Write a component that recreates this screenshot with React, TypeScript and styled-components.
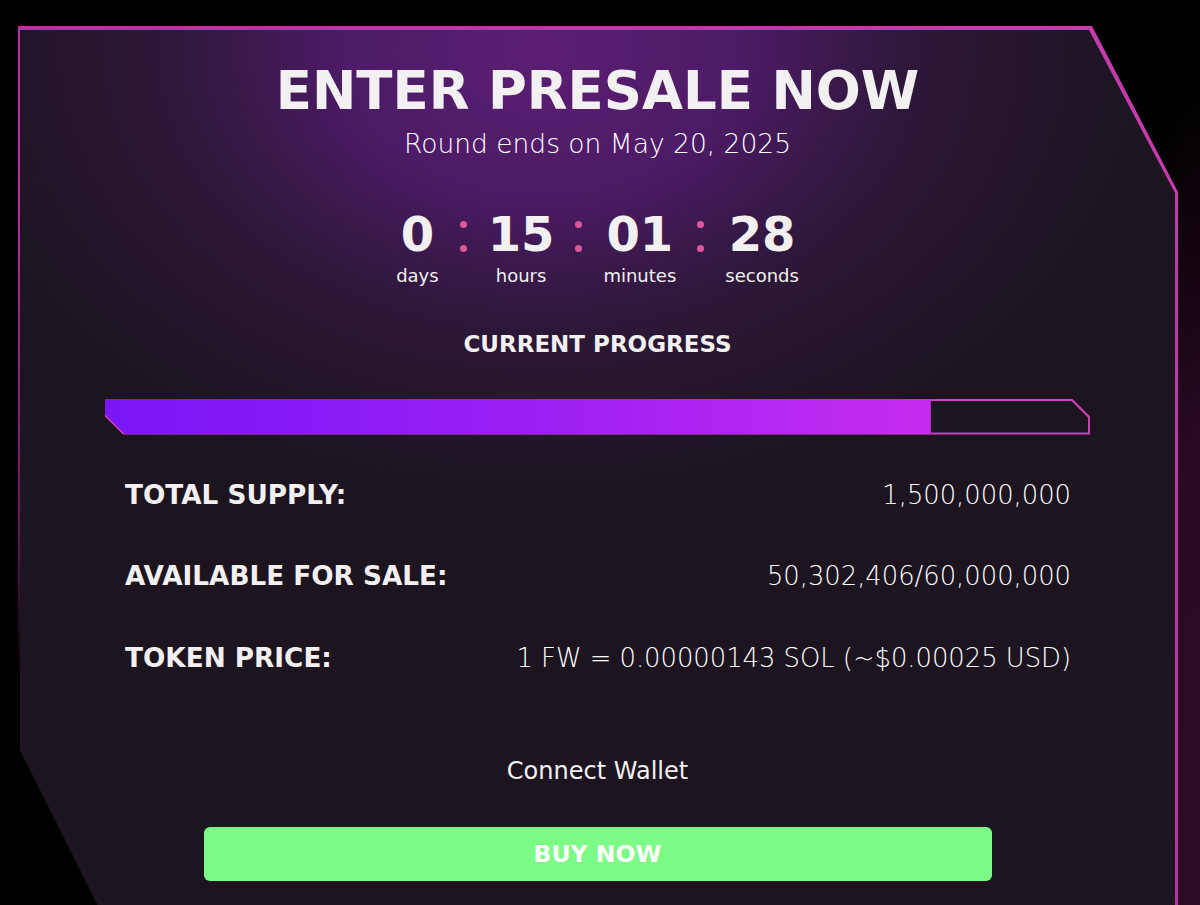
import React from 'react';
import styled, { createGlobalStyle } from 'styled-components';

const FONT = `"DejaVu Sans", "Liberation Sans", sans-serif`;
const TEXT = '#f3f0f1';
const CARD_BG = '#1c1520';

const GlobalStyle = createGlobalStyle`
  html, body {
    margin: 0;
    padding: 0;
    background: #000;
  }
  * {
    box-sizing: border-box;
  }
`;

const Page = styled.div`
  width: 1200px;
  height: 905px;
  overflow: hidden;
  padding: 26px 0 0 18px;
  font-family: ${FONT};
  color: ${TEXT};
  background:
    radial-gradient(ellipse 110px 820px at 100% 100%, #2c0b24 0%, #2a0a22 55%, rgba(20, 4, 16, 0) 100%),
    #000;
`;

const Frame = styled.div`
  width: 1160px;
  height: 900px;
  padding: 4px 3px 0 2px;
  clip-path: polygon(0 0, 1074px 0, 100% 166px, 100% 100%, 90px 100%, 0 720px);
  background: linear-gradient(
    to bottom left,
    #c63db0 0%,
    #b92ca2 60%,
    rgba(170, 40, 150, 0.6) 78%,
    rgba(170, 40, 150, 0) 86%
  );
`;

const Card = styled.section`
  height: 100%;
  display: flex;
  flex-direction: column;
  align-items: center;
  padding: 34px 85px 0 85px;
  clip-path: polygon(0 0, 1069px 0, 100% 163px, 100% 100%, 88px 100%, 0 721px);
  background:
    radial-gradient(ellipse 600px 440px at 520px 20px, #5c1e72 0%, #4d1b67 32%, rgba(52, 24, 66, 0.75) 62%, rgba(28, 21, 32, 0) 100%),
    ${CARD_BG};
`;

const Title = styled.h1`
  margin: 0;
  font-size: 53px;
  line-height: 1;
  font-weight: 700;
`;

const Subtitle = styled.p`
  margin: 14px 0 0;
  font-size: 26.5px;
  line-height: 1;
  font-weight: 200;
  color: #ffffff;
`;

const Countdown = styled.div`
  display: flex;
  align-items: flex-start;
  gap: 21px;
  margin-top: 52px;
`;

const Unit = styled.div`
  display: flex;
  flex-direction: column;
  align-items: center;
`;

const Number = styled.span`
  font-size: 48px;
  line-height: 1;
  font-weight: 700;
`;

const UnitLabel = styled.span`
  margin-top: 9px;
  font-size: 18px;
  line-height: 1;
  font-weight: 400;
`;

const Colon = styled.div`
  display: flex;
  flex-direction: column;
  gap: 17px;
  padding-top: 11px;

  &::before,
  &::after {
    content: '';
    width: 7px;
    height: 7px;
    border-radius: 50%;
    background: #e0569c;
  }
`;

const SectionTitle = styled.h2`
  margin: 48px 0 0;
  font-size: 23px;
  line-height: 1;
  font-weight: 700;
`;

const Track = styled.div`
  position: relative;
  width: 100%;
  height: 36px;
  margin-top: 43px;
  padding: 2px;
  background: #d23fba;
  clip-path: polygon(0 0, calc(100% - 18px) 0, 100% 18px, 100% 100%, 18px 100%, 0 calc(100% - 18px));
`;

const TrackInner = styled.div`
  height: 100%;
  background: ${CARD_BG};
  clip-path: polygon(0 0, calc(100% - 17px) 0, 100% 17px, 100% 100%, 17px 100%, 0 calc(100% - 17px));
`;

const Fill = styled.div`
  position: absolute;
  left: 0;
  top: 0;
  bottom: 0;
  background: linear-gradient(to right, #7a16f7 0%, #9a1ff4 50%, #c62cef 100%);
  clip-path: polygon(0 0, 100% 0, 100% 100%, 20px 100%, 0 calc(100% - 20px));
`;

const Stats = styled.div`
  width: 100%;
  display: flex;
  flex-direction: column;
  gap: 55px;
  margin-top: 47px;
  padding: 0 19px 0 20px;
`;

const StatRow = styled.div`
  display: flex;
  justify-content: space-between;
  align-items: baseline;
  line-height: 1;
`;

const StatLabel = styled.span`
  font-size: 26.3px;
  font-weight: 700;
`;

const StatValue = styled.span`
  font-size: 25.8px;
  font-weight: 200;
  color: #ffffff;
`;

const Connect = styled.div`
  margin-top: 87px;
  font-size: 24px;
  line-height: 1;
  font-weight: 400;
`;

const BuyButton = styled.button`
  width: 788px;
  height: 54px;
  margin-top: 44px;
  border: none;
  border-radius: 6px;
  background: #7cfc86;
  color: #ffffff;
  font-family: ${FONT};
  font-size: 23.5px;
  font-weight: 700;
  cursor: pointer;
`;

const units = [
  { value: '0', label: 'days' },
  { value: '15', label: 'hours' },
  { value: '01', label: 'minutes' },
  { value: '28', label: 'seconds' },
];

const stats = [
  { label: 'TOTAL SUPPLY:', value: '1,500,000,000' },
  { label: 'AVAILABLE FOR SALE:', value: '50,302,406/60,000,000' },
  { label: 'TOKEN PRICE:', value: '1 FW = 0.00000143 SOL (~$0.00025 USD)' },
];

const sold = 50302406;
const forSale = 60000000;

export default function App() {
  const progress = (sold / forSale) * 100;

  return (
    <>
      <GlobalStyle />
      <Page>
        <Frame>
          <Card>
            <Title>ENTER PRESALE NOW</Title>
            <Subtitle>Round ends on May 20, 2025</Subtitle>

            <Countdown>
              {units.map((u, i) => (
                <React.Fragment key={u.label}>
                  {i > 0 && <Colon />}
                  <Unit>
                    <Number>{u.value}</Number>
                    <UnitLabel>{u.label}</UnitLabel>
                  </Unit>
                </React.Fragment>
              ))}
            </Countdown>

            <SectionTitle>CURRENT PROGRESS</SectionTitle>

            <Track>
              <TrackInner />
              <Fill style={{ width: `${progress}%` }} />
            </Track>

            <Stats>
              {stats.map(s => (
                <StatRow key={s.label}>
                  <StatLabel>{s.label}</StatLabel>
                  <StatValue>{s.value}</StatValue>
                </StatRow>
              ))}
            </Stats>

            <Connect>Connect Wallet</Connect>
            <BuyButton>BUY NOW</BuyButton>
          </Card>
        </Frame>
      </Page>
    </>
  );
}
